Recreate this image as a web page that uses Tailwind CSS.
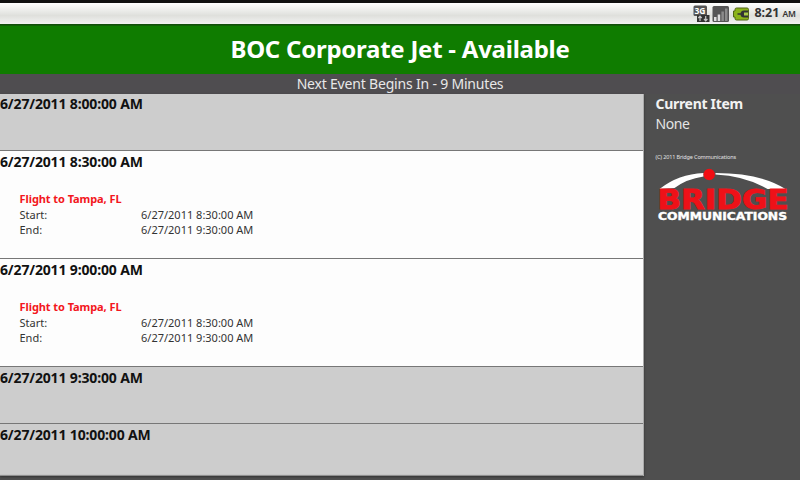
<!DOCTYPE html>
<html lang="en">
<head>
<meta charset="utf-8">
<title>BOC Corporate Jet</title>
<script src="https://cdn.jsdelivr.net/npm/@tailwindcss/browser@4"></script>
</head>
<body class="w-[800px] h-[480px] overflow-hidden bg-[#4f4f4f] font-['Noto_Sans',sans-serif] flex flex-col whitespace-nowrap">
<div class="h-[24px] shrink-0 border-t-[3px] border-[#111] bg-linear-to-b from-white via-[#dfe0dc] via-60% to-[#f3f3f3] flex items-center justify-end pr-[4px]">
  <svg class="w-[56px] h-[20px] mr-[6px]" viewBox="0 0 56 20">
    <rect x=".5" y="1.500" width="13.500" height="10.500" rx="1.500" fill="#555"/>
    <text x="1.500" y="9.500" font-size="8.500" font-weight="700" fill="#fff" textLength="11" lengthAdjust="spacingAndGlyphs">3G</text>
    <path d="M4 11h12.500v7H4z" fill="#333"/>
    <path d="M7 17v-4.500M5.300 14l1.700-1.800L8.700 14M12.700 12v4.500M11 15l1.700 1.800 1.700-1.800" stroke="#c8c8c8" stroke-width="1.200" fill="none"/>
    <rect x="19.500" y="2" width="16.500" height="16" rx="1.500" fill="#555"/>
    <path d="M21 13h2.500v4H21zM24.700 10.500h2.500V17h-2.500z" fill="#ddd"/>
    <path d="M28.400 7.500h2.500V17h-2.500zM32 4.500h2.500V17H32z" fill="#8b8b8b"/>
    <path d="M43.500 4H54q1.500 0 1.500 1.500v9Q55.500 16 54 16H43.500q-1.500 0-1.500-1.500V13h-1.500V7H42V5.500Q42 4 43.500 4z" fill="#8cb31a" stroke="#526516"/>
    <path d="M55 6.500h-4q-3.500 0-3.500 3.500t3.500 3.500h4z" fill="#333"/>
    <path d="M51 8.500h4v3h-4z" fill="#a9c94a"/>
    <path d="M44.500 10h3.500" stroke="#333" stroke-width="1.500"/>
  </svg>
  <div class="flex items-baseline text-[#333] font-bold text-[12.500px] leading-[20px]"><span class="w-[28px] -ml-px">8:21</span><span class="text-[8.500px] font-semibold">AM</span></div>
</div>
<h1 class="h-[50px] shrink-0 bg-[#0f7c00] border-t border-[#13500b] shadow-[inset_0_1px_0_#126008] flex items-center justify-center text-white font-bold text-[24px] leading-[48px] pb-[2px]"><span class="tracking-[-0.25px]">BOC Corporate Jet - Available</span></h1>
<div class="h-[20px] shrink-0 bg-[#4f4d50] text-[#e8e8e8] text-[14px] leading-[20px] text-center"><span class="tracking-[-0.190px]">Next Event Begins In - 9 Minutes</span></div>
<div class="flex h-[386px]">
  <main class="w-[644px] h-[382px] bg-[#cdcdcd] border-r border-[#aaa] text-[#111] shadow-[0_1px_2px_#333,inset_0_-2px_1px_-1px_#888]">
    <section class="h-[57px] border-b border-[#777]"><h2 class="font-bold text-[14px] leading-[20px] tracking-[-0.150px]">6/27/2011 8:00:00 AM</h2></section>
    <section class="h-[108px] border-b border-[#777] bg-[#fdfdfd]"><h2 class="font-bold text-[14px] leading-[21px] tracking-[-0.150px]">6/27/2011 8:30:00 AM</h2>
      <div class="pl-[19.500px] pt-[19px] text-[11px] leading-[15.500px] text-[#333]"><div class="font-bold text-[#f31620] tracking-[-0.070px]">Flight to Tampa, FL</div><div class="flex"><span class="w-[121.500px]">Start:</span><span>6/27/2011 8:30:00 AM</span></div><div class="flex"><span class="w-[121.500px]">End:</span><span>6/27/2011 9:30:00 AM</span></div></div></section>
    <section class="h-[108px] border-b border-[#777] bg-[#fdfdfd]"><h2 class="font-bold text-[14px] leading-[21px] tracking-[-0.150px]">6/27/2011 9:00:00 AM</h2>
      <div class="pl-[19.500px] pt-[19px] text-[11px] leading-[15.500px] text-[#333]"><div class="font-bold text-[#f31620] tracking-[-0.070px]">Flight to Tampa, FL</div><div class="flex"><span class="w-[121.500px]">Start:</span><span>6/27/2011 8:30:00 AM</span></div><div class="flex"><span class="w-[121.500px]">End:</span><span>6/27/2011 9:30:00 AM</span></div></div></section>
    <section class="h-[57px] border-b border-[#777]"><h2 class="font-bold text-[14px] leading-[21px] tracking-[-0.150px]">6/27/2011 9:30:00 AM</h2></section>
    <section><h2 class="font-bold text-[14px] leading-[22px] tracking-[-0.150px]">6/27/2011 10:00:00 AM</h2></section>
  </main>
  <aside class="pl-[11.500px] text-[14px] leading-[20px] text-[#e4e4e4]">
    <h3 class="font-bold text-[#f2f2f2] tracking-[-0.300px]">Current Item</h3>
    <p class="tracking-[-0.400px]">None</p>
    <p class="mt-[19px] text-[5.500px] leading-[8px] tracking-[-0.140px]">(C) 2011 Bridge Communications</p>
    <svg class="w-[134px] h-[58px] mt-[5px]" viewBox="655.500 166 134 58">
      <path d="M659 189Q678 174 703 173V176.500Q686 179 674 188z" fill="#fff"/>
      <path d="M715 173Q760 173 785 189H767Q745 176 715 174.500z" fill="#fff"/>
      <circle cx="708.700" cy="174.500" r="5.700" fill="#f20d12"/>
      <text x="657" y="209.300" font-family="DejaVu Sans" font-weight="700" font-size="27" fill="#ee1118" stroke="#ee1118" stroke-width=".9" textLength="131" lengthAdjust="spacingAndGlyphs">BRIDGE</text>
      <text x="657.500" y="219.700" font-family="DejaVu Sans" font-weight="700" font-size="10.500" fill="#fff" stroke="#fff" stroke-width=".4" textLength="129" lengthAdjust="spacingAndGlyphs">COMMUNICATIONS</text>
    </svg>
  </aside>
</div>
</body>
</html>
